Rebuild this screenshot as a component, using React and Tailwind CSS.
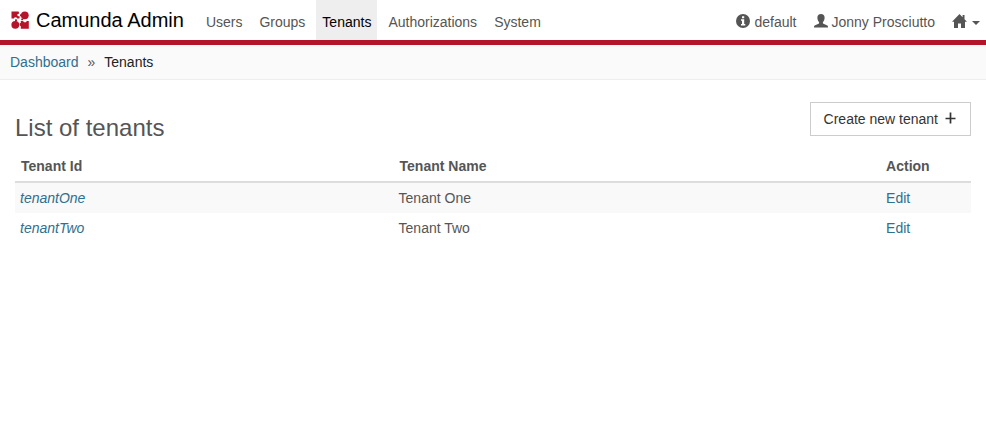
const navItems = ["Users", "Groups", "Tenants", "Authorizations", "System"];

const tenants = [
  { id: "tenantOne", name: "Tenant One" },
  { id: "tenantTwo", name: "Tenant Two" },
];

function LogoIcon() {
  return (
    <svg width="20" height="20" viewBox="0 0 20 20" className="shrink-0" aria-hidden="true">
      <g fill="#b5152b">
        <path d="M1.5 1.5H8.6L9.2 3.6L7.4 4.2L7.6 6L9.8 6.4L9.4 8.6H7.2A1.7 1.7 0 0 0 3.9 8.6H1.5Z" />
        <circle cx="14.8" cy="5.3" r="3.9" />
        <rect x="10" y="4.3" width="2" height="2" />
        <circle cx="5.3" cy="14.8" r="3.9" />
        <rect x="5" y="9.4" width="2" height="2" />
        <path d="M10.8 18.8V16.2L9.6 15.2V13.4L10.8 12.8V11H13L14 12.2H16L16.8 11H18.8V18.8Z" />
        <rect x="11.2" y="8.6" width="2" height="1.6" />
      </g>
    </svg>
  );
}

function InfoIcon() {
  return (
    <svg width="14" height="14" viewBox="0 0 14 14" className="shrink-0" aria-hidden="true">
      <circle cx="7" cy="7" r="7" fill="#555" />
      <path fill="#fff" d="M6 2.2H8.2V4.2H6ZM5 5.2H8.2V9.9H9.3V11.4H5V9.9H6V6.7H5Z" />
    </svg>
  );
}

function UserIcon() {
  return (
    <svg width="14" height="14" viewBox="0 0 14 14" className="shrink-0" aria-hidden="true">
      <path
        fill="#555"
        d="M7 0C4.7 0 3.4 1.4 3.4 3.6C3.4 5.6 4.1 7.3 5.1 8.2V9C5.1 9.4 4.9 9.6 4.5 9.8L1.2 11.2C.4 11.5 0 12 0 12.7V13.6H14V12.7C14 12 13.6 11.5 12.8 11.2L9.5 9.8C9.1 9.6 8.9 9.4 8.9 9V8.2C9.9 7.3 10.6 5.6 10.6 3.6C10.6 1.4 9.3 0 7 0Z"
      />
    </svg>
  );
}

function HomeIcon() {
  return (
    <svg width="15" height="14" viewBox="0 0 15 14" className="shrink-0" aria-hidden="true">
      <path fill="#555" d="M7.5 0L0 7.8H2V14H6V9.4H9V14H13V7.8H15L12.5 5.2V1H10.6V3.2Z" />
    </svg>
  );
}

function PlusIcon() {
  return (
    <svg width="14" height="14" viewBox="0 0 14 14" className="mb-0.5 shrink-0" aria-hidden="true">
      <path d="M7.5 1.5V12.5M2.5 7.5H12.5" stroke="#333" strokeWidth="1.7" fill="none" />
    </svg>
  );
}

export default function App() {
  return (
    <div className="min-h-screen bg-white font-['Liberation_Sans',Arial,sans-serif] text-sm leading-5 text-[#555]">
      <header className="flex h-[45px] items-stretch justify-between border-b-5 border-[#b5152b]">
        <div className="flex">
          <a href="#home" className="flex items-center gap-1.5 pl-2.5 text-xl text-black">
            <LogoIcon />
            Camunda Admin
          </a>
          <nav className="ml-4 flex gap-[5px]">
            {navItems.map((item) => (
              <a
                key={item}
                href={"#" + item.toLowerCase()}
                className={
                  item === "Tenants"
                    ? "bg-[#eee] px-1.5 pt-3 text-black"
                    : "px-1.5 pt-3"
                }
              >
                {item}
              </a>
            ))}
          </nav>
        </div>
        <div className="flex gap-[17px] pr-1.5 pt-3">
          <a href="#engine" className="flex gap-1">
            <span className="pt-0.5"><InfoIcon /></span>
            default
          </a>
          <a href="#profile" className="flex gap-1">
            <span className="pt-0.5"><UserIcon /></span>
            Jonny Prosciutto
          </a>
          <button type="button" aria-label="Apps" className="flex h-[18px] items-center gap-[5px]">
            <HomeIcon />
            <svg width="8" height="4" viewBox="0 0 8 4" className="mt-1" aria-hidden="true">
              <path d="M0 0H8L4 4Z" fill="#555" />
            </svg>
          </button>
        </div>
      </header>

      <nav aria-label="Breadcrumb" className="flex gap-[9px] border-b border-[#eee] bg-[#fafafa] px-2.5 py-[7px]">
        <a href="#dashboard" className="text-[#2f6f8f]">Dashboard</a>
        <span>»</span>
        <span className="text-[#222]">Tenants</span>
      </nav>

      <main className="px-[15px] pt-[22px]">
        <div className="flex items-start justify-between">
          <h1 className="pt-3 text-2xl leading-7">List of tenants</h1>
          <button
            type="button"
            className="flex h-[34px] items-center gap-[5px] border border-[#ccc] bg-white px-[13px] text-[#333]"
          >
            Create new tenant
            <PlusIcon />
          </button>
        </div>

        <table className="mt-[9px] w-full table-fixed border-collapse text-left">
          <thead>
            <tr className="border-b-2 border-[#ddd]">
              <th className="w-[39.6%] px-1.5 py-[5px]">Tenant Id</th>
              <th className="w-[51%] px-1.5 py-[5px]">Tenant Name</th>
              <th className="px-[5px] py-[5px]">Action</th>
            </tr>
          </thead>
          <tbody>
            {tenants.map((tenant) => (
              <tr key={tenant.id} className="odd:bg-[#f9f9f9]">
                <td className="p-[5px] italic">
                  <a href={"#" + tenant.id} className="text-[#2f6f8f]">{tenant.id}</a>
                </td>
                <td className="p-[5px]">{tenant.name}</td>
                <td className="p-[5px]">
                  <a href={"#edit-" + tenant.id} className="text-[#2f6f8f]">Edit</a>
                </td>
              </tr>
            ))}
          </tbody>
        </table>
      </main>
    </div>
  );
}
